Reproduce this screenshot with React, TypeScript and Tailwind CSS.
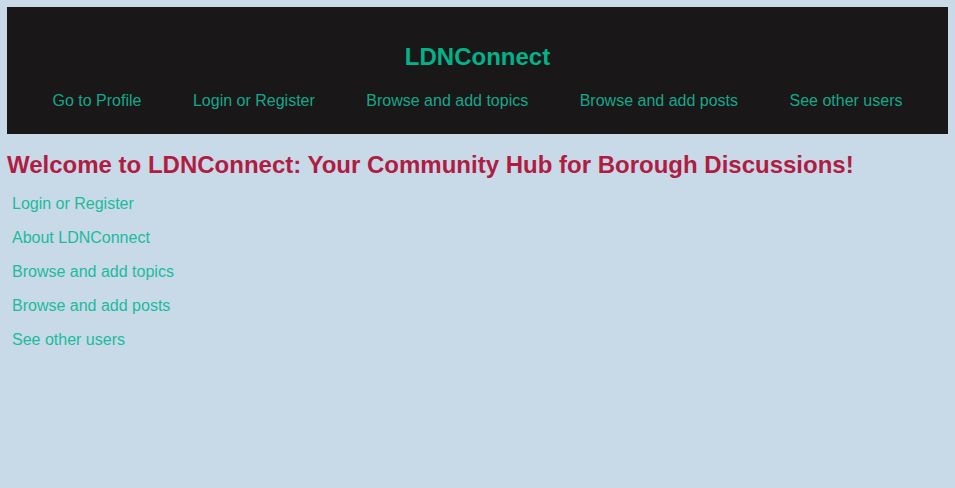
const navLinks = [
  'Go to Profile',
  'Login or Register',
  'Browse and add topics',
  'Browse and add posts',
  'See other users',
];

const homeLinks = [
  'Login or Register',
  'About LDNConnect',
  'Browse and add topics',
  'Browse and add posts',
  'See other users',
];

export default function App() {
  return (
    <div className="min-h-screen bg-[#c8d9e8] p-[7px] font-['Liberation_Sans',Arial,sans-serif]">
      <header className="bg-[#1a1718] pt-[36px] pb-[24px] flex flex-col items-center">
        <h1 className="text-[24px] leading-[28px] font-bold text-[#00b38a]">LDNConnect</h1>
        <nav className="mt-[21px] flex justify-center gap-[51.5px]">
          {navLinks.map((l) => (
            <a key={l} href="#" className="text-[16px] leading-[18px] text-[#14a88a]">
              {l}
            </a>
          ))}
        </nav>
      </header>

      <main>
        <h2 className="mt-[17px] text-[24px] leading-[28px] font-bold text-[#b01c42]">
          Welcome to LDNConnect: Your Community Hub for Borough Discussions!
        </h2>
        <ul className="mt-[16px] pl-[5px] flex flex-col gap-[16px]">
          {homeLinks.map((l) => (
            <li key={l} className="leading-[18px]">
              <a href="#" className="block text-[16px] leading-[18px] text-[#1abc9c]">
                {l}
              </a>
            </li>
          ))}
        </ul>
      </main>
    </div>
  );
}
